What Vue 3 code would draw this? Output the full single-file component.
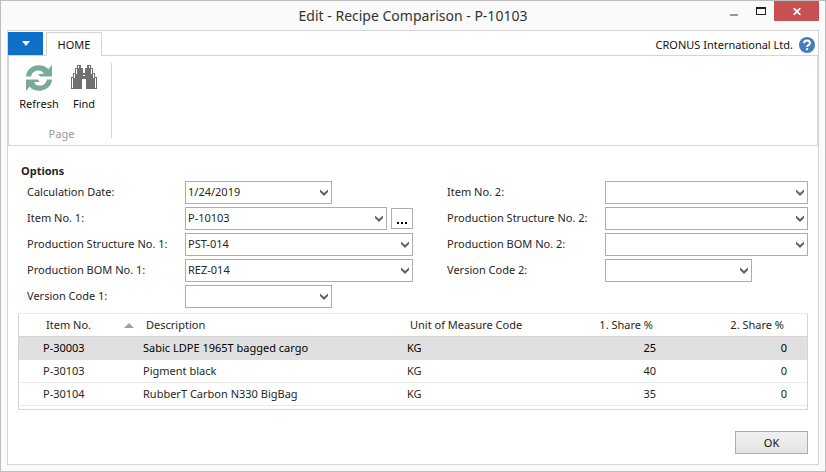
<script setup>
import { reactive, ref } from 'vue'

const leftFields = reactive([
  { id: 'calc-date', label: 'Calculation Date:', value: '1/24/2019', short: true },
  { id: 'item-1', label: 'Item No. 1:', value: 'P-10103', assist: true },
  { id: 'structure-1', label: 'Production Structure No. 1:', value: 'PST-014' },
  { id: 'bom-1', label: 'Production BOM No. 1:', value: 'REZ-014' },
  { id: 'version-1', label: 'Version Code 1:', value: '', short: true },
])
const rightFields = reactive([
  { id: 'item-2', label: 'Item No. 2:', value: '' },
  { id: 'structure-2', label: 'Production Structure No. 2:', value: '' },
  { id: 'bom-2', label: 'Production BOM No. 2:', value: '' },
  { id: 'version-2', label: 'Version Code 2:', value: '', short: true },
])
const columns = [leftFields, rightFields]

const rows = [
  { no: 'P-30003', description: 'Sabic LDPE 1965T bagged cargo', unit: 'KG', first: 25, second: 0 },
  { no: 'P-30103', description: 'Pigment black', unit: 'KG', first: 40, second: 0 },
  { no: 'P-30104', description: 'RubberT Carbon N330 BigBag', unit: 'KG', first: 35, second: 0 },
]
const selected = ref('P-30003')
</script>

<template>
  <div class="window">
    <header class="titlebar">
      <h1 class="title">Edit - Recipe Comparison - P-10103</h1>
      <div class="controls">
        <button class="control" type="button" aria-label="Minimize">
          <svg width="8" height="2" viewBox="0 0 8 2"><path d="M0 0h8v2H0z" fill="#999" /></svg>
        </button>
        <button class="control" type="button" aria-label="Maximize">
          <svg width="10" height="8" viewBox="0 0 10 8" shape-rendering="crispEdges"><path d="M0 0h10v8H0zM1 2v5h8V2z" fill="#1e1e1e" fill-rule="evenodd" /></svg>
        </button>
        <button class="control close" type="button" aria-label="Close">
          <svg width="8" height="7" viewBox="0 0 8 7"><path d="M.7.2 7.3 6.8M7.3.2.7 6.8" stroke="#fff" stroke-width="1.8" /></svg>
        </button>
      </div>
    </header>

    <div class="frame">
      <nav class="tabs">
        <button class="app-menu" type="button" aria-label="Application menu">
          <svg width="8" height="5" viewBox="0 0 8 5"><path d="M0 0h8L4 5z" fill="#fff" /></svg>
        </button>
        <button class="tab" type="button">HOME</button>
        <div class="company">
          <span>CRONUS International Ltd.</span>
          <button class="help" type="button" aria-label="Help">
            <svg width="16" height="16" viewBox="0 0 16 16">
              <circle cx="8" cy="8" r="8" fill="#457ebb" />
              <path d="M5 6.200C5 4.200 6.300 3.400 8 3.400s3 .9 3 2.500c0 1.900-2.900 2-2.900 4.200" fill="none" stroke="#fff" stroke-width="2" />
              <path d="M7.100 11.200h2v2h-2z" fill="#fff" />
            </svg>
          </button>
        </div>
      </nav>

      <section class="ribbon">
        <div class="group">
          <div class="actions">
            <button class="action" type="button">
              <svg width="26" height="26" viewBox="0 0 26 26" fill="#7aab9a">
                <path d="M0 11.5C.4 5.2 5.6.3 12.8.3c4 0 7.3 1.4 9.600 4L26 0v11.500H14.200l-2-2.500 5.800-.2c-1.300-2.300-2.900-3.400-5.500-3.400-4 0-6.800 2.300-7.400 6.100z" />
                <path d="M26 14.500C25.600 20.800 20.400 25.700 13.200 25.700c-4 0-7.300-1.400-9.600-4L0 26V14.500h11.800l2 2.500-5.800.2c1.300 2.300 2.900 3.400 5.500 3.400 4 0 6.800-2.300 7.400-6.100z" />
              </svg>
              <span>Refresh</span>
            </button>
            <button class="action" type="button">
              <svg width="26" height="24" viewBox="0 0 26 24" shape-rendering="crispEdges">
                <path d="M0 12h2V8h2V3h2V0h4v3h2v5h2V3h2V0h4v3h2v5h2v4h2v12H15V14h-4v10H0z" fill="#707070" />
                <path d="M1 13h1v10H1zM3 9h1v4H3zM5 4h1v5H5zM7 1h1v2H7zM24 13h1v10h-1zM22 9h1v4h-1zM20 4h1v5h-1zM18 1h1v2h-1zM12 10h2v1h-2z" fill="#fff" />
              </svg>
              <span>Find</span>
            </button>
          </div>
          <div class="group-name">Page</div>
        </div>
      </section>

      <main class="content">
        <h2 class="heading">Options</h2>
        <form class="fields" @submit.prevent>
          <div v-for="(column, index) in columns" :key="index" class="column">
            <div v-for="field in column" :key="field.id" class="field">
              <label :for="field.id">{{ field.label }}</label>
              <div class="entry">
                <div class="combo" :class="{ short: field.short }">
                  <select :id="field.id" v-model="field.value">
                    <option :value="field.value">{{ field.value }}</option>
                  </select>
                  <svg class="chevron" width="8" height="7" viewBox="0 0 8 7"><path d="M0 .5 4 4 8 .5V3L4 7 0 3z" fill="#606060" /></svg>
                </div>
                <button v-if="field.assist" class="assist" type="button" aria-label="Edit item">
                  <svg width="10" height="2" viewBox="0 0 10 2"><path d="M0 0h2v2H0zM4 0h2v2H4zM8 0h2v2H8z" /></svg>
                </button>
              </div>
            </div>
          </div>
        </form>

        <div class="grid">
          <table>
            <colgroup>
              <col class="col-no" />
              <col />
              <col class="col-unit" />
              <col class="col-first" />
              <col class="col-second" />
            </colgroup>
            <thead>
              <tr>
                <th scope="col">
                  <div class="sorted">
                    <span>Item No.</span>
                    <svg width="10" height="5" viewBox="0 0 10 5"><path d="M5 0l5 5H0z" fill="#a0a0a0" /></svg>
                  </div>
                </th>
                <th scope="col" class="description">Description</th>
                <th scope="col">Unit of Measure Code</th>
                <th scope="col" class="number">1. Share %</th>
                <th scope="col" class="number">2. Share %</th>
              </tr>
            </thead>
            <tbody>
              <tr v-for="row in rows" :key="row.no" :class="{ selected: row.no === selected }" @click="selected = row.no">
                <td>{{ row.no }}</td>
                <td class="description">{{ row.description }}</td>
                <td>{{ row.unit }}</td>
                <td class="number">{{ row.first }}</td>
                <td class="number">{{ row.second }}</td>
              </tr>
            </tbody>
          </table>
        </div>

        <footer class="footer">
          <button class="ok" type="button">OK</button>
        </footer>
      </main>
    </div>
  </div>
</template>

<style>
body {
  background: #fafafa;
}
</style>

<style scoped>
* {
  box-sizing: border-box;
}
.window {
  display: flex;
  flex-direction: column;
  min-height: 100vh;
  padding: 0 6px 6px;
  border: 1px solid #bebebe;
  background: #fafafa;
  color: #262626;
  font: 11px/16px "Noto Sans", "Open Sans", sans-serif;
}
button,
select {
  margin: 0;
  padding: 0;
  border: 0;
  background: none;
  color: inherit;
  font: inherit;
}
svg {
  display: block;
}
.titlebar {
  display: grid;
  grid-template-columns: 1fr auto 1fr;
  height: 29px;
}
.title {
  grid-column: 2;
  margin: 0;
  font-size: 14px;
  font-weight: 400;
  line-height: 30px;
  color: #333;
}
.controls {
  display: flex;
  justify-content: flex-end;
  align-items: flex-start;
}
.control {
  display: flex;
  align-items: center;
  justify-content: center;
  width: 27px;
  height: 20px;
}
.control:first-child {
  align-items: flex-end;
  padding-bottom: 5px;
}
.close {
  width: 45px;
  background: #c75050;
}
.frame {
  display: flex;
  flex: 1;
  flex-direction: column;
  border: 1px solid #d4d4d4;
  background: #fff;
}
.tabs {
  display: flex;
  align-items: flex-end;
  height: 24px;
}
.app-menu {
  display: flex;
  align-items: center;
  justify-content: center;
  width: 35px;
  height: 23px;
  background: #1070c8;
}
.tab {
  position: relative;
  z-index: 1;
  width: 56px;
  height: 24px;
  margin: 0 0 -1px 3px;
  padding-top: 1px;
  border: 1px solid #d4d4d4;
  border-bottom: 0;
  background: #fff;
  color: #111;
}
.company {
  display: flex;
  align-items: center;
  gap: 6px;
  height: 24px;
  margin-left: auto;
  padding: 3px 3px 0 0;
  color: #111;
}
.ribbon {
  display: flex;
  padding: 7px 0;
  border: 1px solid #d4d4d4;
}
.group {
  display: flex;
  flex-direction: column;
  justify-content: space-between;
  height: 75px;
  padding: 0 6px 0 9px;
  border-right: 1px solid #d4d4d4;
}
.actions {
  display: flex;
  gap: 3px;
}
.action {
  display: flex;
  flex-direction: column;
  align-items: center;
  justify-content: space-between;
  width: 42px;
  height: 49px;
  padding-top: 2px;
  color: #111;
}
.group-name {
  color: #999;
  line-height: 8px;
  text-align: center;
}
.content {
  display: flex;
  flex: 1;
  flex-direction: column;
  padding: 17px 10px 10px;
}
.heading {
  margin: 0 0 0 3px;
  font-size: 11px;
  line-height: 16px;
}
.fields {
  display: grid;
  grid-template-columns: 386fr 361fr;
  gap: 34px;
  padding-left: 9px;
}
.field {
  display: grid;
  grid-template-columns: 158px 1fr;
  align-items: center;
  height: 26px;
}
.entry {
  display: flex;
  align-items: center;
  gap: 4px;
}
.combo {
  display: grid;
  flex: 1;
  align-items: center;
}
.short {
  flex: 0 0 147px;
}
.combo select {
  grid-area: 1 / 1;
  width: 100%;
  height: 23px;
  padding: 0 16px 0 2px;
  border: 1px solid #abadb3;
  border-radius: 0;
  appearance: none;
  background: #fff;
}
.chevron {
  grid-area: 1 / 1;
  justify-self: end;
  margin-right: 4px;
  pointer-events: none;
}
.assist {
  display: flex;
  align-items: flex-end;
  justify-content: center;
  width: 22px;
  height: 21px;
  padding-bottom: 4px;
  border: 1px solid #abadb3;
  background: #fff;
}
.grid {
  margin-top: 4px;
  padding-bottom: 3px;
  border: 1px solid #d4d4d4;
  border-top-color: #ececec;
}
table {
  width: 100%;
  border-collapse: separate;
  border-spacing: 0;
  table-layout: fixed;
}
.col-no {
  width: 115px;
}
.col-unit {
  width: 163px;
}
.col-first {
  width: 130px;
}
.col-second {
  width: 131px;
}
th,
td {
  height: 23px;
  padding: 0 20px 0 24px;
  border-bottom: 1px solid #ececec;
  font-weight: 400;
  text-align: left;
  white-space: nowrap;
}
th {
  padding: 0 23px 0 27px;
  border-color: #d4d4d4;
}
th:first-child {
  padding-right: 0;
}
td.description {
  padding-left: 9px;
}
th.description {
  padding-left: 12px;
}
th.number,
td.number {
  padding-left: 0;
  text-align: right;
}
.sorted {
  display: flex;
  align-items: center;
  justify-content: space-between;
}
.selected td {
  border-color: #e0e0e0;
  background: #e0e0e0;
  color: #000;
}
.footer {
  display: flex;
  justify-content: flex-end;
  margin-top: auto;
}
.ok {
  width: 73px;
  height: 23px;
  border: 1px solid #acacac;
  background: linear-gradient(#f0f0f0, #e4e4e4);
  color: #111;
}
</style>
